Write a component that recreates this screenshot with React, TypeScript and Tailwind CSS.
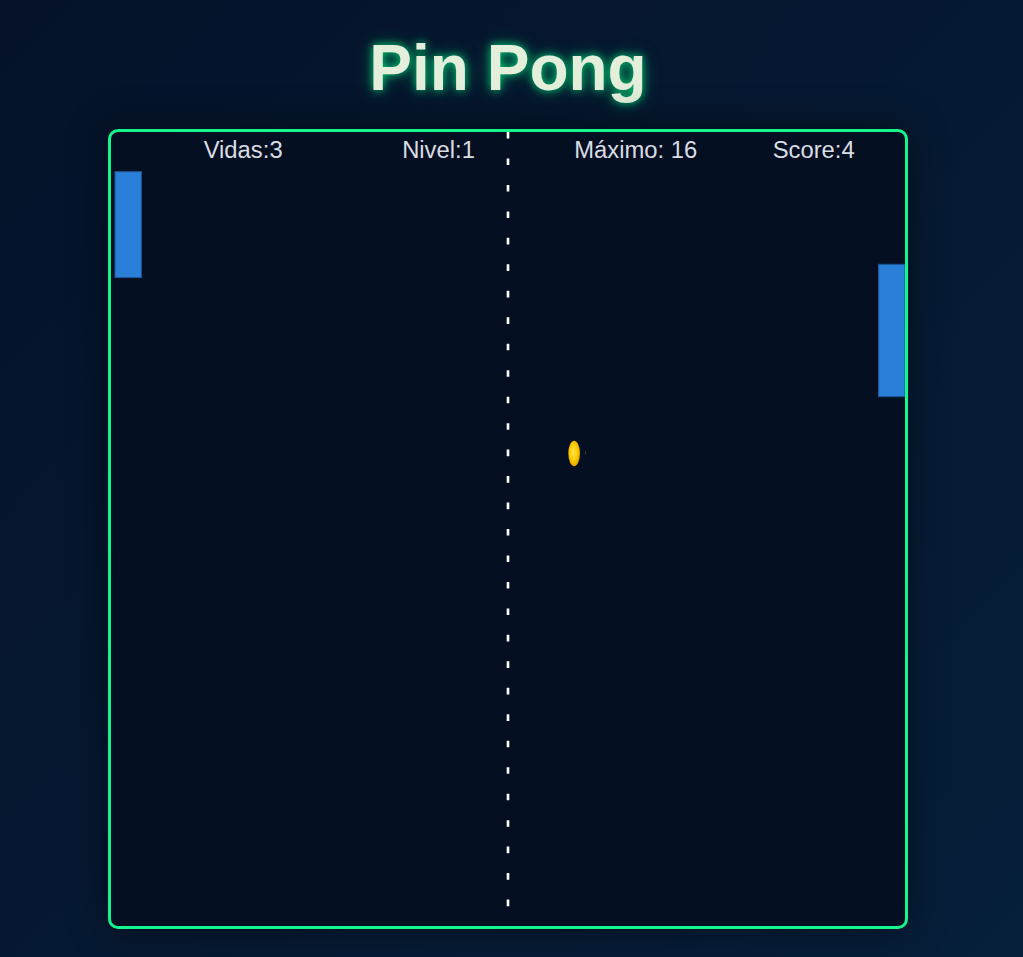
import React from 'react';

// canvas interno de 600x600 escalado al tablero (794px)
const stats = [
  { label: 'Vidas:3', x: 70 },
  { label: 'Nivel:1', x: 220 },
  { label: 'Máximo: 16', x: 350 },
  { label: 'Score:4', x: 500 },
];

function Board() {
  return (
    <div className="w-[800px] h-[800px] border-[3px] border-[#14f58c] rounded-[10px] bg-[#050f22] shadow-[0_0_40px_rgba(0,0,0,0.45)] overflow-hidden">
      <svg viewBox="0 0 600 600" className="block w-full h-full">
        <defs>
          <radialGradient id="ball" cx="45%" cy="45%" r="60%">
            <stop offset="0%" stopColor="#ffe14a" />
            <stop offset="55%" stopColor="#ffcc00" />
            <stop offset="100%" stopColor="#d99a00" />
          </radialGradient>
        </defs>

        {/* línea central */}
        <line x1="300" y1="0" x2="300" y2="600" stroke="#ffffff" strokeWidth="2" strokeDasharray="5 15" />

        {/* marcador */}
        {stats.map((s) => (
          <text
            key={s.label}
            x={s.x}
            y="20"
            fill="#d9dde4"
            fontSize="18"
            fontFamily="'Liberation Sans', Arial, sans-serif"
          >
            {s.label}
          </text>
        ))}

        {/* paletas */}
        <rect x="3" y="30" width="20" height="80" fill="#2a7fd9" stroke="#1c5596" strokeWidth="0.8" />
        <rect x="580" y="100" width="20" height="100" fill="#2a7fd9" stroke="#1c5596" strokeWidth="0.8" />

        {/* pelota */}
        <ellipse cx="350" cy="243" rx="4.4" ry="9.6" fill="url(#ball)" />
        <ellipse cx="358.6" cy="242.4" rx="0.4" ry="1.6" fill="#5a5a30" opacity="0.6" />
      </svg>
    </div>
  );
}

export default function App() {
  return (
    <div className="min-h-screen bg-[linear-gradient(135deg,#05122a_0%,#061a33_60%,#061f3a_100%)] flex flex-col items-center pr-[7px] font-['Liberation_Sans',Arial,sans-serif]">
      <h1 className="mt-8 text-[64px] leading-[72px] font-bold text-[#e3eedb] [text-shadow:0_0_8px_rgba(0,255,136,0.75),0_0_18px_rgba(0,255,136,0.35)]">
        Pin Pong
      </h1>
      <div className="mt-[25px]">
        <Board />
      </div>
    </div>
  );
}
